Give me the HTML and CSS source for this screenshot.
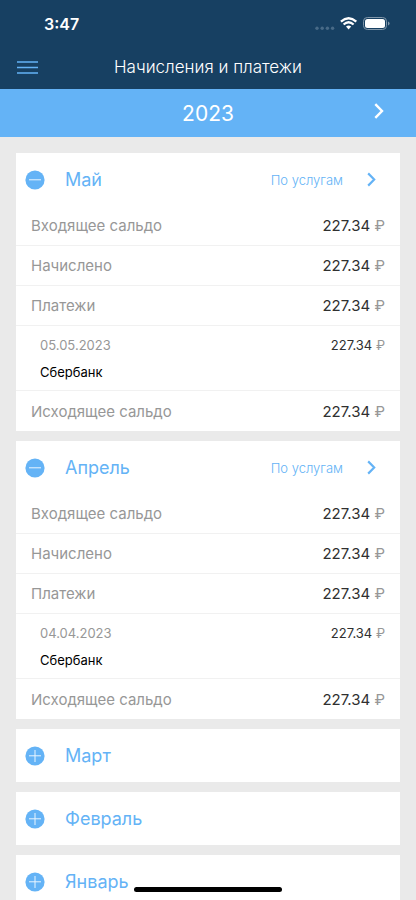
FILE: index.html
```html
<!DOCTYPE html>
<html lang="ru">
<head>
<meta charset="utf-8">
<meta name="viewport" content="width=device-width, initial-scale=1">
<title>Начисления и платежи</title>
<link rel="stylesheet" href="styles.css">
</head>
<body>
<svg class="sprite" aria-hidden="true">
  <symbol id="minus" viewBox="0 0 20 20"><circle cx="10" cy="10" r="9.6" fill="#64b3f6"/><path d="M4 9.8H16" stroke="#e8f5ff" stroke-width="1"/></symbol>
  <symbol id="plus" viewBox="0 0 20 20"><circle cx="10" cy="10" r="9.6" fill="#64b3f6"/><path d="M4 9.8H16M10 4V16" stroke="#e8f5ff" stroke-width="1"/></symbol>
  <symbol id="chevron" viewBox="0 0 10 16"><path d="M1.3 1.2L8 8L1.3 14.8" fill="none" stroke="currentColor" stroke-width="2.4"/></symbol>
</svg>
<div class="app">
  <header class="top">
    <div class="status">
      <span class="clock">3:47</span>
      <svg class="indicators" width="75" height="14" viewBox="0 0 75 14" aria-hidden="true">
        <g fill="#486a87"><circle cx="2" cy="11.2" r="1.7"/><circle cx="7.2" cy="11.2" r="1.7"/><circle cx="12.4" cy="11.2" r="1.7"/><circle cx="17.6" cy="11.2" r="1.7"/></g>
        <g fill="none" stroke="#fff" stroke-width="2.3"><path d="M25.9 4.6Q33.6 -2 41.3 4.6"/><path d="M28.6 7.5Q33.6 3.1 38.6 7.5"/></g>
        <path d="M31 9.6Q33.6 7.5 36.2 9.6L33.6 12.4Z" fill="#fff"/>
        <rect x="48.5" y=".5" width="23" height="12" rx="3.8" fill="none" stroke="#8097aa"/>
        <rect x="50" y="2" width="20" height="9" rx="2.5" fill="#fff"/>
        <path d="M73 4.6Q74.6 5 74.6 6.5Q74.6 8 73 8.4Z" fill="#8097aa"/>
      </svg>
    </div>
    <div class="nav">
      <button class="menu" type="button" aria-label="Меню">
        <svg width="21" height="13" viewBox="0 0 21 13"><path d="M0 1H21M0 6.5H21M0 12H21" stroke="#64b3f6" stroke-width="1.6"/></svg>
      </button>
      <h1>Начисления и платежи</h1>
    </div>
  </header>
  <div class="year">
    <h2>2023</h2>
    <button class="next" type="button" aria-label="Следующий год"><svg width="10" height="16"><use href="#chevron"/></svg></button>
  </div>
  <main class="months">
    <section class="card">
      <div class="head">
        <button class="toggle" type="button" aria-expanded="true"><svg width="20" height="20"><use href="#minus"/></svg>Май</button>
        <a class="services" href="#may">По услугам<svg width="9" height="15"><use href="#chevron"/></svg></a>
      </div>
      <dl class="rows">
        <div class="row"><dt>Входящее сальдо</dt><dd>227.34 <span>₽</span></dd></div>
        <div class="row"><dt>Начислено</dt><dd>227.34 <span>₽</span></dd></div>
        <div class="row"><dt>Платежи</dt><dd>227.34 <span>₽</span></dd></div>
        <div class="row payment"><dt><time datetime="2023-05-05">05.05.2023</time><b>Сбербанк</b></dt><dd>227.34 <span>₽</span></dd></div>
        <div class="row"><dt>Исходящее сальдо</dt><dd>227.34 <span>₽</span></dd></div>
      </dl>
    </section>
    <section class="card">
      <div class="head">
        <button class="toggle" type="button" aria-expanded="true"><svg width="20" height="20"><use href="#minus"/></svg>Апрель</button>
        <a class="services" href="#april">По услугам<svg width="9" height="15"><use href="#chevron"/></svg></a>
      </div>
      <dl class="rows">
        <div class="row"><dt>Входящее сальдо</dt><dd>227.34 <span>₽</span></dd></div>
        <div class="row"><dt>Начислено</dt><dd>227.34 <span>₽</span></dd></div>
        <div class="row"><dt>Платежи</dt><dd>227.34 <span>₽</span></dd></div>
        <div class="row payment"><dt><time datetime="2023-04-04">04.04.2023</time><b>Сбербанк</b></dt><dd>227.34 <span>₽</span></dd></div>
        <div class="row"><dt>Исходящее сальдо</dt><dd>227.34 <span>₽</span></dd></div>
      </dl>
    </section>
    <section class="card"><div class="head"><button class="toggle" type="button" aria-expanded="false"><svg width="20" height="20"><use href="#plus"/></svg>Март</button></div></section>
    <section class="card"><div class="head"><button class="toggle" type="button" aria-expanded="false"><svg width="20" height="20"><use href="#plus"/></svg>Февраль</button></div></section>
    <section class="card"><div class="head"><button class="toggle" type="button" aria-expanded="false"><svg width="20" height="20"><use href="#plus"/></svg>Январь</button></div></section>
  </main>
  <div class="home"></div>
</div>
</body>
</html>
```
FILE: styles.css
```css
* { box-sizing: border-box; }

body, h1, h2, dl, dd { margin: 0; }

body {
  font-family: Inter, "Liberation Sans", sans-serif;
  background: #eaeaea;
}

button {
  padding: 0;
  border: 0;
  background: none;
  font: inherit;
  color: inherit;
  cursor: pointer;
}

svg { display: block; flex: none; }

.sprite { position: absolute; width: 0; height: 0; }

.app {
  display: flex;
  flex-direction: column;
  height: 100vh;
}

.top {
  flex: none;
  background: #174062;
  color: #fff;
}

.status {
  display: flex;
  align-items: center;
  justify-content: space-between;
  height: 45px;
  padding: 3px 26px 0 44px;
}

.clock { font-size: 16px; font-weight: 600; }

.nav {
  display: grid;
  grid-template-columns: 21px 1fr 21px;
  align-items: center;
  height: 44px;
  padding: 0 17px;
}

.nav h1 {
  font-size: 17px;
  font-weight: 300;
  text-align: center;
  white-space: nowrap;
}

.year {
  flex: none;
  display: grid;
  grid-template-columns: 10px 1fr 10px;
  align-items: center;
  height: 48px;
  padding: 0 32px;
  background: #64b3f6;
  color: #fff;
}

.year h2 {
  grid-column: 2;
  font-size: 21px;
  font-weight: 400;
  text-align: center;
}

.next { padding-bottom: 4px; }

.months {
  flex: 1;
  min-height: 0;
  display: flex;
  flex-direction: column;
  gap: 10px;
  padding: 16px;
  overflow-y: auto;
  scrollbar-width: none;
}

.card { flex: none; background: #fff; }

.head {
  display: flex;
  align-items: center;
  justify-content: space-between;
  height: 53px;
  padding: 0 24px 0 9px;
  color: #64b3f6;
}

.toggle {
  display: flex;
  align-items: center;
  gap: 20px;
  font-size: 18px;
}

.services {
  display: flex;
  align-items: center;
  gap: 24px;
  font-size: 13px;
  font-weight: 300;
  color: inherit;
  text-decoration: none;
}

.row {
  display: flex;
  align-items: center;
  justify-content: space-between;
  height: 40px;
  padding: 0 15px;
  border-bottom: 1px solid #f1f1f1;
  font-size: 15px;
  color: #979797;
}

.row:last-child { border-bottom: 0; }

.row dd { color: #303030; }

.row dd span { color: #979797; }

.payment {
  align-items: flex-start;
  height: 65px;
  padding: 6px 15px 0 24px;
  font-size: 13px;
  line-height: 27px;
}

.payment time, .payment b { display: block; }

.payment b { font-weight: 400; color: #000; }

.home {
  position: fixed;
  bottom: 8px;
  left: 50%;
  width: 148px;
  height: 5px;
  margin-left: -74px;
  border-radius: 3px;
  background: #000;
}
```
